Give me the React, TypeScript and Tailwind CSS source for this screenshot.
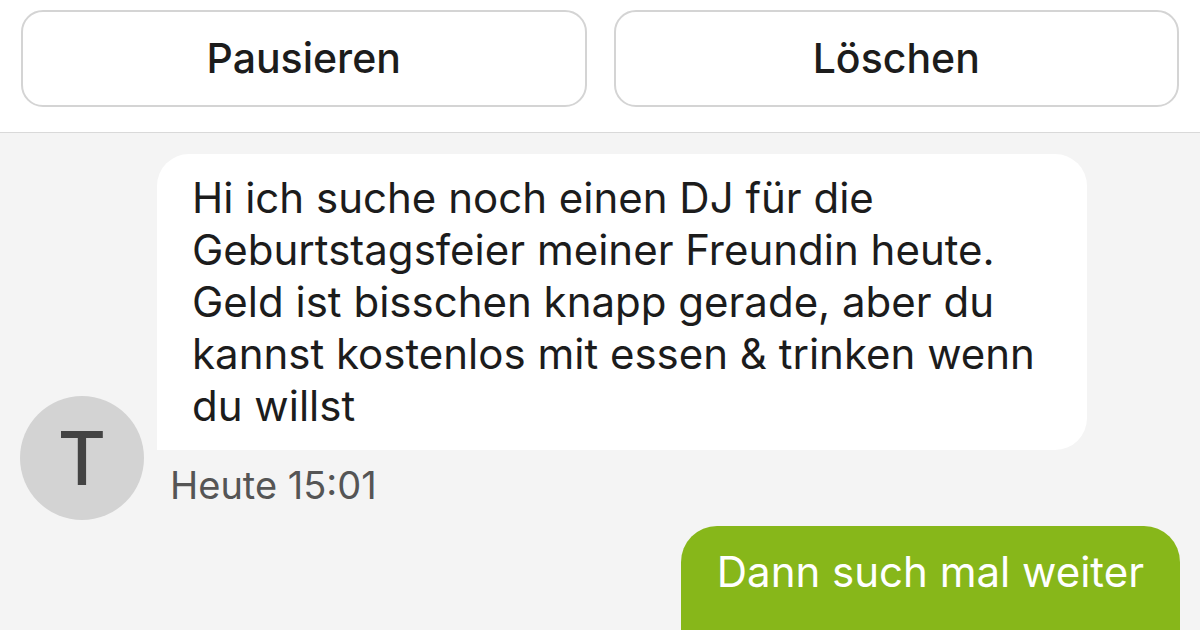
const lines = [
  'Hi ich suche noch einen DJ für die',
  'Geburtstagsfeier meiner Freundin heute.',
  'Geld ist bisschen knapp gerade, aber du',
  'kannst kostenlos mit essen & trinken wenn',
  'du willst',
];

const App = (): JSX.Element => {
  return (
    <div className="w-[1200px] h-[630px] overflow-hidden bg-[#f4f4f4] flex flex-col font-['Inter',sans-serif]">
      {/* action buttons */}
      <div className="h-[133px] shrink-0 bg-white border-b border-[#d9d9d9] flex gap-[27px] pl-[21px] pr-[21px] pt-[10px]">
        <button className="flex-1 h-[97px] rounded-[22px] border-2 border-[#d4d4d4] bg-white text-[41px] font-medium text-[#1c1c1c] flex items-center justify-center">
          Pausieren
        </button>
        <button className="flex-1 h-[97px] rounded-[22px] border-2 border-[#d4d4d4] bg-white text-[41px] font-medium text-[#1c1c1c] flex items-center justify-center">
          Löschen
        </button>
      </div>

      {/* chat */}
      <div className="flex flex-col pt-[21px]">
        <div className="flex items-end gap-[13px] pl-[20px]">
          <div className="w-[124px] h-[124px] shrink-0 rounded-full bg-[#d3d3d3] flex items-center justify-center text-[74px] font-medium text-[#434343]">
            T
          </div>
          <div className="flex flex-col pb-[13px]">
            <div className="w-[930px] bg-white rounded-[32px] rounded-bl-none px-[35px] py-[18px] text-[42px] leading-[52px] text-[#1c1c1c]">
              {lines.map((line) => (
                <div key={line} className="whitespace-nowrap">
                  {line}
                </div>
              ))}
            </div>
            <div className="mt-[13px] ml-[13px] text-[38px] leading-[44px] text-[#555555]">
              Heute 15:01
            </div>
          </div>
        </div>

        <div className="flex justify-end pr-[20px] mt-[6px]">
          <div className="h-[130px] bg-[#87b71a] rounded-t-[36px] pl-[36px] pr-[36px] pt-[20px] text-[42px] leading-[52px] text-white">
            Dann such mal weiter
          </div>
        </div>
      </div>
    </div>
  );
};

export default App;
